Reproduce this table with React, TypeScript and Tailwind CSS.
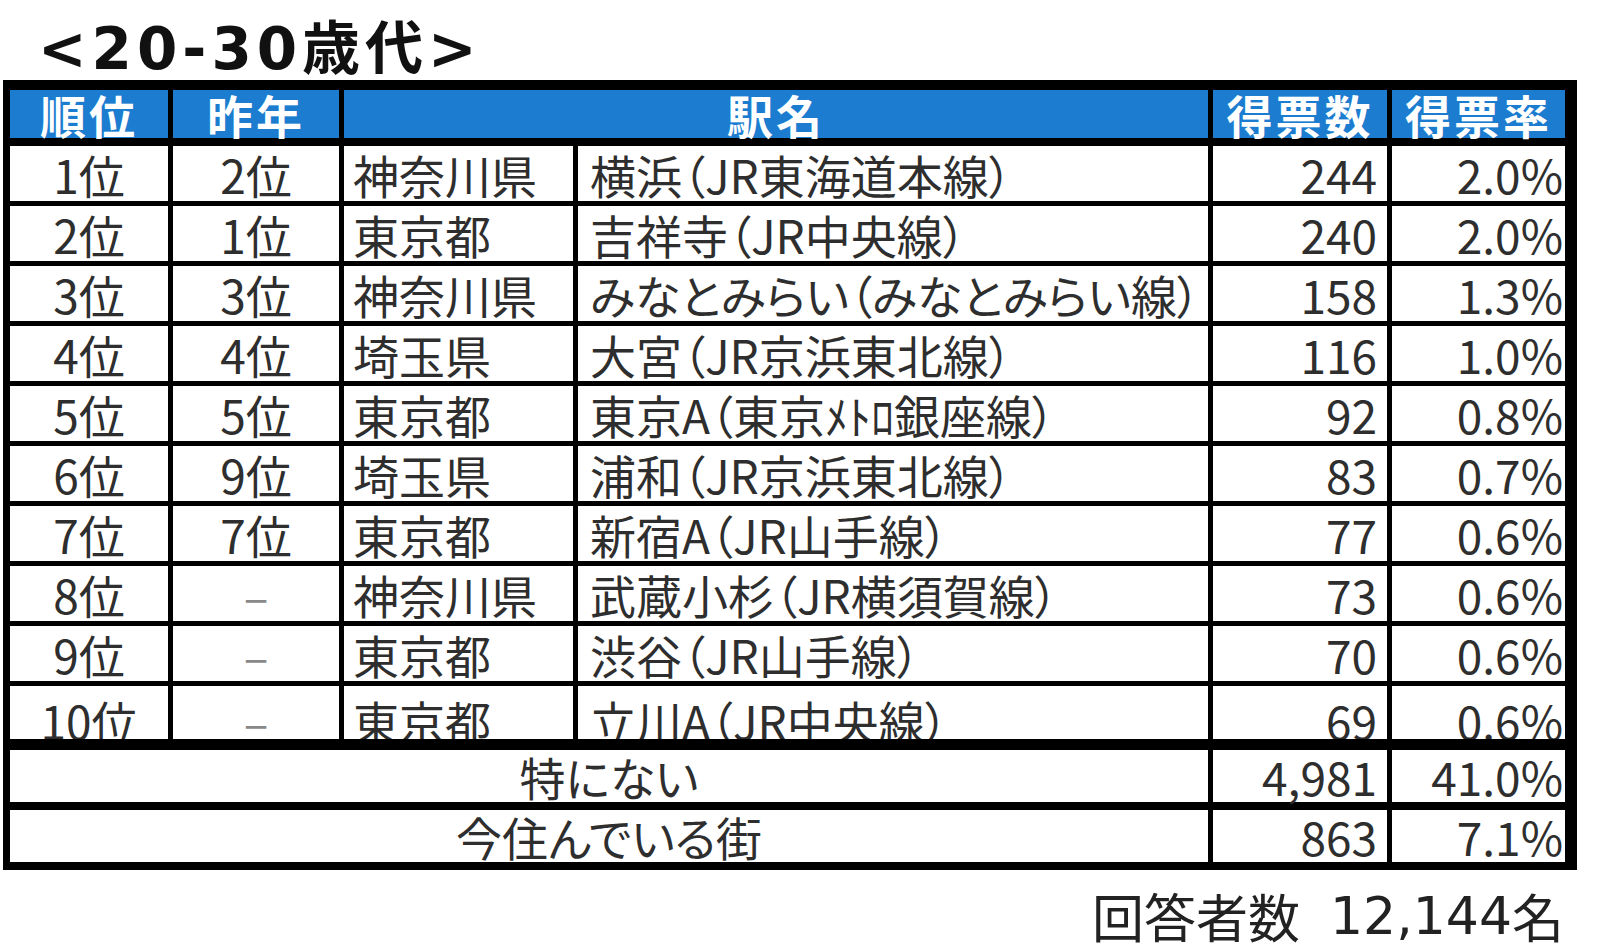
const rows = [
  ['1位', '2位', '神奈川県', '横浜（JR東海道本線）', '244', '2.0%'],
  ['2位', '1位', '東京都', '吉祥寺（JR中央線）', '240', '2.0%'],
  ['3位', '3位', '神奈川県', 'みなとみらい（みなとみらい線）', '158', '1.3%'],
  ['4位', '4位', '埼玉県', '大宮（JR京浜東北線）', '116', '1.0%'],
  ['5位', '5位', '東京都', '東京A（東京ﾒﾄﾛ銀座線）', '92', '0.8%'],
  ['6位', '9位', '埼玉県', '浦和（JR京浜東北線）', '83', '0.7%'],
  ['7位', '7位', '東京都', '新宿A（JR山手線）', '77', '0.6%'],
  ['8位', '–', '神奈川県', '武蔵小杉（JR横須賀線）', '73', '0.6%'],
  ['9位', '–', '東京都', '渋谷（JR山手線）', '70', '0.6%'],
  ['10位', '–', '東京都', '立川A（JR中央線）', '69', '0.6%'],
]

const cols = 'grid grid-cols-[158px_166px_229px_630px_174px_173px] gap-x-[5px]'
const head = 'bg-[#1c7ccf] flex items-center justify-center text-white font-bold text-[46px] tracking-[3px] leading-none'

export default function App() {
  return (
    <div className="w-[1600px] h-[949px] bg-white text-[#2e2e2e] font-['Noto_Sans_CJK_JP',sans-serif] [font-feature-settings:'palt']">
      {/* Title */}
      <div className="h-[80px] pt-[20px] pl-[38px] text-[58px] font-bold leading-none tracking-[5px] text-[#111] font-['DejaVu_Sans','Noto_Sans_CJK_JP',sans-serif]">
        &lt;20-30歳代&gt;
      </div>

      {/* Table */}
      <div className="ml-[3px] w-[1574px] bg-black pl-[7px] pt-[10px] pr-[12px] pb-[8px] flex flex-col">
        <div className={`${cols} h-[48px]`}>
          <div className={head}>順位</div>
          <div className={head}>昨年</div>
          <div className={`${head} col-span-2`}>駅名</div>
          <div className={head}>得票数</div>
          <div className={head}>得票率</div>
        </div>

        <div className="mt-[8px] flex flex-col gap-y-[5px]">
          {rows.map((r, i) => {
            const last = i === rows.length - 1
            const c = `bg-white flex items-center text-[46px] leading-none whitespace-nowrap ${last ? 'pt-[14px] overflow-hidden' : ''}`
            return (
              <div key={i} className={`${cols} ${last ? 'h-[53px]' : 'h-[55px]'}`}>
                <div className={`${c} justify-center`}>{r[0]}</div>
                <div className={`${c} justify-center ${r[1] === '–' ? 'text-[#888]' : ''}`}>{r[1]}</div>
                <div className={`${c} pl-[9px]`}>{r[2]}</div>
                <div className={`${c} pl-[12px]`}>{r[3]}</div>
                <div className={`${c} justify-end pr-[10px]`}>{r[4]}</div>
                <div className={`${c} justify-end pr-[2px]`}>{r[5]}</div>
              </div>
            )
          })}
        </div>

        <div className="mt-[11px] flex flex-col gap-y-[8px]">
          {[
            ['特にない', '4,981', '41.0%'],
            ['今住んでいる街', '863', '7.1%'],
          ].map((r) => (
            <div key={r[0]} className={`${cols} h-[52px]`}>
              <div className="col-span-4 bg-white flex items-center justify-center text-[46px] leading-none">{r[0]}</div>
              <div className="bg-white flex items-center justify-end pr-[10px] text-[46px] leading-none">{r[1]}</div>
              <div className="bg-white flex items-center justify-end pr-[2px] text-[46px] leading-none">{r[2]}</div>
            </div>
          ))}
        </div>
      </div>

      {/* Footer */}
      <div className="mt-[20px] flex justify-end pr-[36px] text-[52px] leading-none text-[#222]">
        <span>回答者数</span>
        <span className="ml-[30px] font-['DejaVu_Sans',sans-serif]">12,144</span>
        <span>名</span>
      </div>
    </div>
  )
}
